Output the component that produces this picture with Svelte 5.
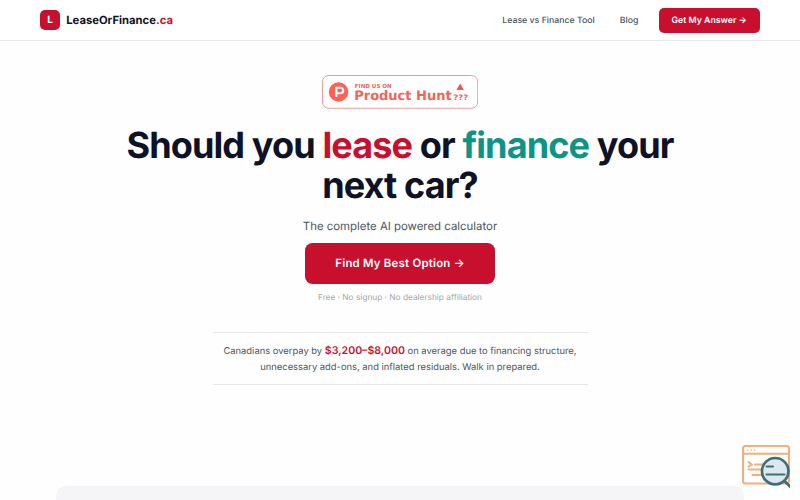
<script>
  const links = ['Lease vs Finance Tool', 'Blog'];
</script>

<div class="page">
  <header>
    <a class="brand" href="#top">
      <span class="mark">L</span>
      <span class="name">LeaseOrFinance<span class="red">.ca</span></span>
    </a>
    <nav>
      {#each links as link}
        <a class="link" href="#top">{link}</a>
      {/each}
      <a class="answer" href="#top">Get My Answer →</a>
    </nav>
  </header>

  <main>
    <svg class="badge" viewBox="0 0 250 54" role="img" aria-label="Product Hunt">
      <rect x="0.8" y="0.8" width="248.4" height="52.4" rx="10" fill="#fff" stroke="#e8857f" stroke-width="1.3" />
      <circle cx="26.5" cy="27" r="15.6" fill="#ff6154" />
      <path d="M22.9 35V20.4h6.6a4.4 4.4 0 0 1 0 8.8h-6.6" fill="none" stroke="#fff" stroke-width="3.4" />
      <text x="52.5" y="20" font-size="9" textLength="59" lengthAdjust="spacingAndGlyphs">FIND US ON</text>
      <text x="51.5" y="40" font-size="21" textLength="156" lengthAdjust="spacingAndGlyphs">Product Hunt</text>
      <path d="M221 13.5l6 10.5h-12z" fill="#f0584d" />
      <text x="210" y="40" font-size="12" textLength="24" lengthAdjust="spacingAndGlyphs">???</text>
    </svg>

    <h1>Should you <span class="red">lease</span> or <span class="green">finance</span> your next car?</h1>
    <p class="sub">The complete AI powered calculator</p>
    <a class="cta" href="#top">Find My Best Option →</a>
    <p class="note">Free · No signup · No dealership affiliation</p>

    <p class="fact">
      Canadians overpay by <strong>$3,200–$8,000</strong> on average due to financing structure, unnecessary add-ons, and inflated residuals. Walk in prepared.
    </p>
  </main>

  <section class="panel"></section>

  <svg class="widget" viewBox="0 0 48 43" fill="none" stroke-linecap="round">
    <g stroke="#f4ae78" stroke-width="2">
      <rect x="1" y="1" width="46" height="37.4" rx="2.5" fill="#fff" />
      <path d="M1 8.8h46" />
      <path d="M5.5 5h.2M9 5h.2M12.5 5h.2" stroke-width="1.4" />
      <path d="M6.5 17l3.2 2.4-3.2 2.4M13 19.6h8M6.5 24.6h12M10.5 30h9" />
    </g>
    <circle cx="33.2" cy="26.2" r="13.2" fill="#dce8f0" stroke="#3f6f75" stroke-width="2.7" />
    <path d="M24.5 21.4h6.5M24.5 29.6h18" stroke="#3f6f75" stroke-width="2" />
    <path d="M43 36.5l5.5 5.5" stroke="#3f6f75" stroke-width="2.8" />
  </svg>
</div>

<style>
  :global(body) {
    margin: 0;
    overflow: hidden;
  }

  .page {
    position: relative;
    height: 500px;
    overflow: hidden;
    display: flex;
    flex-direction: column;
    background: #fefefe;
    font-family: Inter, sans-serif;
    text-rendering: geometricPrecision;
    color: #0f1226;
  }

  a {
    color: inherit;
    text-decoration: none;
  }

  header {
    height: 40px;
    flex-shrink: 0;
    padding: 0 40px;
    display: flex;
    align-items: center;
    justify-content: space-between;
    border-bottom: 1px solid #e9eaed;
    background: #fff;
  }

  .brand {
    display: flex;
    align-items: center;
    gap: 6.25px;
    font-size: 11.25px;
    font-weight: 700;
  }

  .mark {
    width: 20px;
    height: 20px;
    border-radius: 5px;
    background: #c8102e;
    color: #fff;
    display: grid;
    place-items: center;
    font-size: 10px;
  }

  .red {
    color: #c8102e;
  }

  .green {
    color: #0d9488;
  }

  nav {
    display: flex;
    align-items: center;
    font-size: 8.75px;
    line-height: 12px;
    font-weight: 500;
    color: #4b5563;
    gap: 25px;
  }

  .link {
    padding-top: 2px;
  }

  .answer {
    box-sizing: border-box;
    width: 101.5px;
    height: 25px;
    padding-top: 1px;
    margin-left: -5px;
    border-radius: 5px;
    background: #c8102e;
    color: #fff;
    font-weight: 600;
    display: grid;
    place-items: center;
  }

  main {
    display: flex;
    flex-direction: column;
    align-items: center;
    text-align: center;
    padding-top: 34px;
  }

  .badge {
    width: 156.25px;
    height: 33.75px;
  }

  .badge text {
    font-family: "DejaVu Sans", sans-serif;
    font-weight: 700;
    fill: #f0655b;
  }

  h1 {
    margin: 17.5px 0 0;
    width: 560px;
    font-size: 36.1px;
    line-height: 39.4px;
    font-weight: 700;
    letter-spacing: -0.025em;
  }

  .sub {
    margin: 11px 0 0;
    font-size: 11.4px;
    line-height: 20px;
    color: #4b5563;
  }

  .cta {
    margin-top: 7px;
    width: 190px;
    height: 40.5px;
    border-radius: 7.5px;
    background: #c8102e;
    color: #fff;
    font-size: 11.4px;
    font-weight: 600;
    letter-spacing: 0.02em;
    display: grid;
    place-items: center;
  }

  .note {
    margin: 7.5px 0 0;
    font-size: 8.3px;
    line-height: 14px;
    color: #a3a6ad;
  }

  .fact {
    box-sizing: border-box;
    width: 375px;
    height: 53px;
    margin: 26.5px 0 0;
    padding-top: 10px;
    border-top: 1px solid #e5e7eb;
    border-bottom: 1px solid #e5e7eb;
    font-size: 9.4px;
    line-height: 16px;
    color: #50565f;
  }

  .fact strong {
    font-size: 10.6px;
    font-weight: 600;
    color: #c8102e;
  }

  .panel {
    position: relative;
    height: 40px;
    flex-shrink: 0;
    margin: 101px 56px 0;
    border-radius: 10px 10px 0 0;
    background: #f5f5f8;
  }

  .widget {
    position: absolute;
    left: 742px;
    top: 445px;
    width: 48px;
    height: 43px;
  }
</style>
